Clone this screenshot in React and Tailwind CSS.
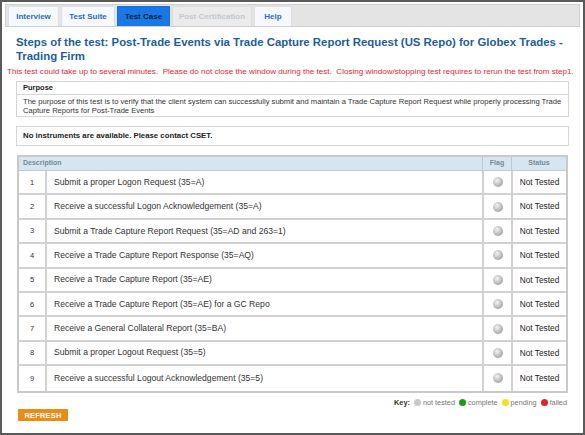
import React from 'react'

const steps = [
  'Submit a proper Logon Request (35=A)',
  'Receive a successful Logon Acknowledgement (35=A)',
  'Submit a Trade Capture Report Request (35=AD and 263=1)',
  'Receive a Trade Capture Report Response (35=AQ)',
  'Receive a Trade Capture Report (35=AE)',
  'Receive a Trade Capture Report (35=AE) for a GC Repo',
  'Receive a General Collateral Report (35=BA)',
  'Submit a proper Logout Request (35=5)',
  'Receive a successful Logout Acknowledgement (35=5)',
]

const tabs = [
  { label: 'Interview', w: 'w-[51px]' },
  { label: 'Test Suite', w: 'w-[54px]' },
  { label: 'Test Case', w: 'w-[53px]', active: true },
  { label: 'Post Certification', w: 'w-[80px]', disabled: true },
  { label: 'Help', w: 'w-[38px]' },
]

function Ball({ className }) {
  return <span className={'inline-block rounded-full ' + className} />
}

export default function App() {
  return (
    <div className="w-[585px] h-[435px] bg-[#5a5a5a] p-[2px] font-['Liberation_Sans',Arial,sans-serif]">
      <div className="w-full h-full bg-white flex flex-col">
        {/* tabs */}
        <div className="mx-[3px] mt-[2px] h-[23px] bg-[#e4e4e4] border border-[#cfcfcf] flex items-end gap-[2px] px-[2px]">
          {tabs.map((t) => (
            <div
              key={t.label}
              className={
                t.w +
                ' h-[20px] flex items-center justify-center text-[8px] font-bold border border-b-0 ' +
                (t.active
                  ? 'bg-[#1778e6] border-[#1470d6] text-[#0b1f3a]'
                  : t.disabled
                  ? 'bg-[#ebebeb] border-[#dcdcdc] text-[#c2c8d0]'
                  : 'bg-[#f5f8fc] border-[#dedede] text-[#2e6bb8]')
              }
            >
              {t.label}
            </div>
          ))}
        </div>

        <div className="px-[14px] pt-[8px]">
          <h1 className="text-[11.4px] leading-[14px] font-bold text-[#1d5d9b] whitespace-nowrap">
            Steps of the test: Post-Trade Events via Trade Capture Report Request (US Repo) for Globex Trades -
            <br />
            Trading Firm
          </h1>
        </div>
        <p className="px-[5px] mt-[4px] text-[8.1px] leading-[10px] text-[#e3262e] whitespace-nowrap">
          This test could take up to several minutes.&nbsp; Please do not close the window during the test.&nbsp; Closing window/stopping test requires to rerun the test from step1.
        </p>

        <div className="mx-[14px] mt-[4px] border border-[#d6d6d6]">
          <div className="h-[13px] px-[6px] flex items-center text-[7.5px] font-bold text-[#222] border-b border-[#d6d6d6]">
            Purpose
          </div>
          <div className="px-[6px] pt-[2px] pb-[1px] text-[7.6px] leading-[9px] text-[#333]">
            The purpose of this test is to verify that the client system can successfully submit and maintain a Trade Capture Report Request while properly processing Trade Capture Reports for Post-Trade Events
          </div>
        </div>

        <div className="mx-[14px] mt-[9px] h-[20px] border border-[#d6d6d6] flex items-end pb-[3px] px-[6px] text-[7.8px] font-bold text-[#222]">
          No instruments are available. Please contact CSET.
        </div>

        <div className="mx-[15px] mt-[9px] border-2 border-[#c9c9c9]">
          <div className="h-[14px] bg-[#d5e6f1] flex text-[7px] text-[#7a8895] font-bold border-b border-[#c9c9c9]">
            <div className="flex-1 px-[4px] flex items-center">Description</div>
            <div className="w-[29px] flex items-center justify-center border-l border-[#c0c8ce]">Flag</div>
            <div className="w-[55px] flex items-center justify-center border-l border-[#c0c8ce]">Status</div>
          </div>
          {steps.map((s, i) => (
            <div
              key={i}
              className={'h-[24.4px] flex text-[8.6px] text-[#333] ' + (i < steps.length - 1 ? 'border-b-2 border-[#d2d2d2]' : '')}
            >
              <div className="w-[28px] flex items-center justify-center border-r-2 border-[#d2d2d2] text-[7.5px]">{i + 1}</div>
              <div className="flex-1 flex items-center px-[7px]">{s}</div>
              <div className="w-[29px] flex items-center justify-center border-l-2 border-[#d2d2d2]">
                <Ball className="w-[10px] h-[10px] bg-[radial-gradient(circle_at_40%_35%,#f4f4f4,#b4b4b4_60%,#8a8a8a)]" />
              </div>
              <div className="w-[55px] flex items-center justify-center border-l-2 border-[#d2d2d2] text-[8.3px] text-[#222]">
                Not Tested
              </div>
            </div>
          ))}
        </div>

        <div className="mx-[16px] mt-[5px] flex justify-end items-center gap-[4px] text-[7.3px] text-[#777]">
          <span className="font-bold text-[#333]">Key:</span>
          <span className="flex items-center gap-[2px]"><Ball className="w-[7px] h-[7px] bg-[#c8c8c8]" />not tested</span>
          <span className="flex items-center gap-[2px]"><Ball className="w-[7px] h-[7px] bg-[#1c9c1c]" />complete</span>
          <span className="flex items-center gap-[2px]"><Ball className="w-[7px] h-[7px] bg-[#f2e21a]" />pending</span>
          <span className="flex items-center gap-[2px]"><Ball className="w-[7px] h-[7px] bg-[#e0222a]" />failed</span>
        </div>

        <div className="mx-[16px] mt-[1px]">
          <button className="w-[50px] h-[12px] bg-[#e98d14] text-white text-[7.5px] font-bold flex items-center justify-center tracking-[0.2px]">
            REFRESH
          </button>
        </div>
      </div>
    </div>
  )
}
